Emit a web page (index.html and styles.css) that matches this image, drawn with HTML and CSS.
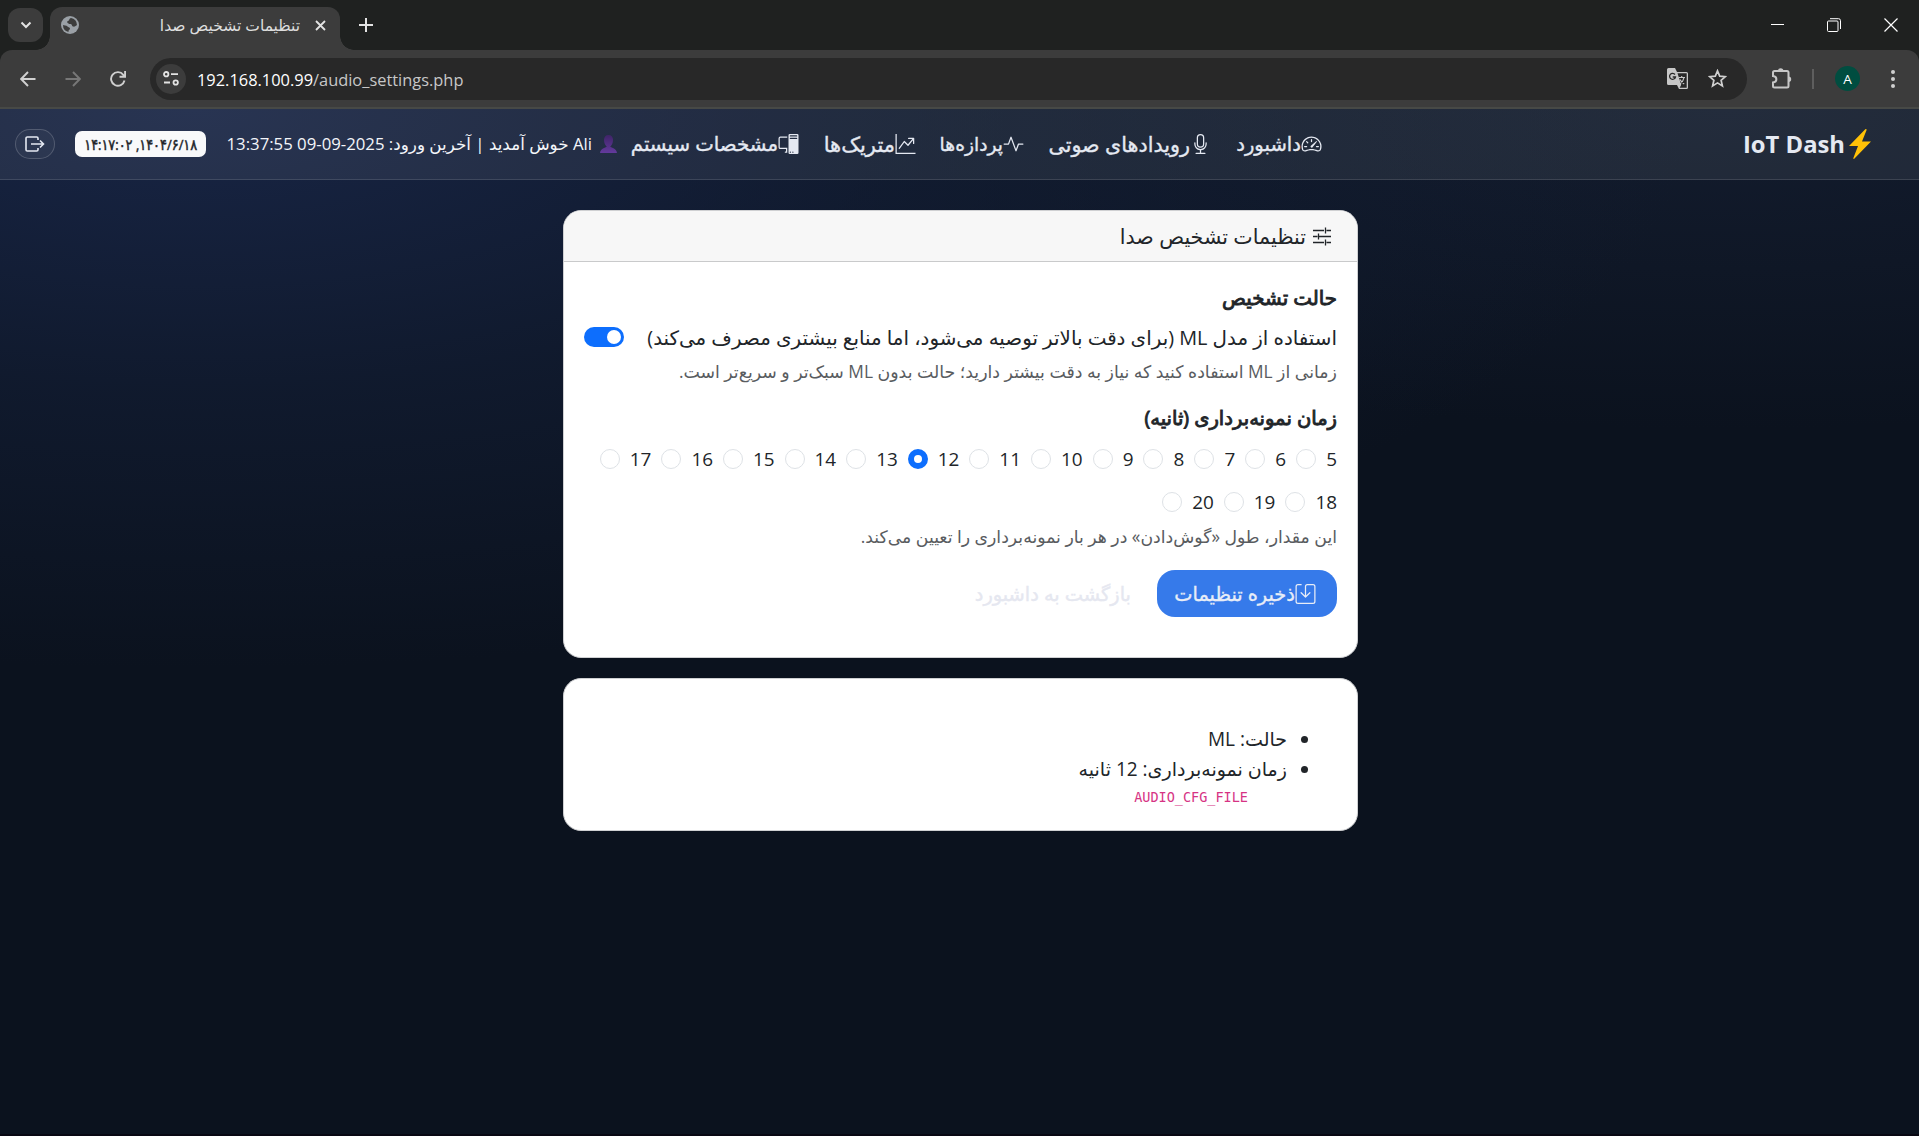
FILE: index.html
```
<!DOCTYPE html>
<html lang="fa">
<head>
<meta charset="utf-8">
<title>تنظیمات تشخیص صدا</title>
<link rel="stylesheet" href="styles.css">
</head>
<body>
<header class="browser">
  <div class="tabs">
    <div class="tab-search"><svg width="12" height="8" viewBox="0 0 12 8" fill="none" stroke="#e3e3e3" stroke-width="2"><path d="M1.5 1.5 6 6l4.500-4.500"/></svg></div>
    <div class="tab">
      <svg width="18" height="18" viewBox="0 0 18 18"><circle cx="9" cy="9" r="9" fill="#9aa0a6"/><path d="M10 2c-2 .5-1.500 2.500-3 3C5 5.500 7 8 9 8c2.500 0 1.500 2 3 2.500 1.500.5 3-.5 4-1.500a7 7 0 0 0-6-7zM2 9c1 .5 3.500 0 4.500 1.500.8 1.200 2.500.5 2.500 2s-2 1.500-1.500 3.500A7.200 7.200 0 0 1 2 9z" fill="#3c3c3c"/></svg>
      <span class="tab-title" dir="rtl">تنظیمات تشخیص صدا</span>
      <svg width="11" height="11" viewBox="0 0 11 11" stroke="#e3e3e3" stroke-width="1.800"><path d="m1 1 9 9M10 1l-9 9"/></svg>
    </div>
    <svg class="new-tab" width="14" height="14" viewBox="0 0 14 14" stroke="#e3e3e3" stroke-width="2"><path d="M7 0v14M0 7h14"/></svg>
    <div class="window-buttons">
      <svg width="13" height="13" viewBox="0 0 13 13" stroke="#fff"><path d="M0 5.500h13"/></svg>
      <svg width="14" height="14" viewBox="0 0 14 14" fill="none" stroke="#fff"><rect x=".5" y="3" width="10.500" height="10.500" rx="1"/><path d="M3 .7h8.500a2 2 0 0 1 2 2V11"/></svg>
      <svg width="14" height="14" viewBox="0 0 14 14" stroke="#fff" stroke-width="1.200"><path d="m.5.5 13 13M13.500.5l-13 13"/></svg>
    </div>
  </div>
  <div class="toolbar">
    <svg width="16" height="16" viewBox="0 0 16 16" fill="none" stroke="#d0d0d0" stroke-width="1.900"><path d="M15.500 8H1.500M8 1 1.200 8 8 15"/></svg>
    <svg width="16" height="16" viewBox="0 0 16 16" fill="none" stroke="#777" stroke-width="1.900"><path d="M.5 8h14M8 1l6.800 7L8 15"/></svg>
    <svg width="16" height="16" viewBox="0 0 16 16" fill="none" stroke="#d0d0d0" stroke-width="1.900"><path d="M14.500 9.500A6.800 6.800 0 1 1 13.300 3.800L15 5.500M15.100 0v5.700H9.500"/></svg>
    <div class="address">
      <div class="site-info"><svg width="16" height="15" viewBox="0 0 16 15" fill="none" stroke="#e3e3e3" stroke-width="1.800"><circle cx="3.200" cy="3.200" r="2.200"/><path d="M8 3.200h7M1 11.500h6"/><circle cx="12.700" cy="11.500" r="2.200"/></svg></div>
      <span class="url"><b>192.168.100.99</b>/audio_settings.php</span>
      <svg class="translate" width="21" height="21" viewBox="0 0 21 21"><path d="M1.500 0H8l2 4h9.500a1.500 1.500 0 0 1 1.500 1.500v14a1.500 1.500 0 0 1-1.500 1.500H12l-2-4H1.500A1.500 1.500 0 0 1 0 15.500v-14A1.500 1.500 0 0 1 1.500 0z" fill="#c7c7c7"/><path d="M10.500 5.300h9.200v14.400h-7l1.500-3z" fill="#282828"/><path d="M8 6.500A3 3 0 1 0 8.500 9H5.700" fill="none" stroke="#282828" stroke-width="1.300"/><path d="M11.800 9.500H18M14.700 8v1.500M17 9.500c-.5 3-2 5-4 6.500M13 11.500c1 2 2.500 3.500 4.200 4.500" fill="none" stroke="#c7c7c7" stroke-width="1.200"/></svg>
      <svg width="19" height="19" viewBox="0 0 19 19" fill="none" stroke="#d0d0d0" stroke-width="1.700"><path d="m9.500 1.800 2.200 5.300 5.700.5-4.300 3.700 1.300 5.600-4.900-3-4.900 3 1.300-5.600L1.600 7.600l5.700-.5z"/></svg>
    </div>
    <svg class="puzzle" width="21" height="21" viewBox="0 0 21 21"><path d="M2 4.500a1.500 1.500 0 0 1 1.500-1.500H16a1.500 1.500 0 0 1 1.500 1.500v13.500a1.500 1.500 0 0 1-1.500 1.500H3.500A1.500 1.500 0 0 1 2 18v-3.500c4.500-.5 4.500-6 0-6.500z" fill="none" stroke="#c7c7c7" stroke-width="2"/><path d="M7 3a2.700 2.700 0 0 1 5.400 0zM17.500 8.500a2.700 2.700 0 0 1 0 5.400z" fill="#c7c7c7"/></svg>
    <i class="divider"></i>
    <span class="avatar">A</span>
    <svg class="kebab" width="4" height="18" viewBox="0 0 4 18" fill="#d0d0d0"><circle cx="2" cy="2" r="2"/><circle cx="2" cy="9" r="2"/><circle cx="2" cy="16" r="2"/></svg>
  </div>
</header>

<div class="page" dir="rtl">
  <nav class="navbar">
    <a class="brand"><svg width="22" height="30" viewBox="0 0 22 30" fill="#ffc107"><path d="M16.500 0 0 17h9L4.200 29.500 5 30 22 12.500h-9L17.800.5z"/></svg><span dir="ltr">IoT Dash</span></a>
    <div class="links">
      <a class="link dash"><svg viewBox="0 0 16 16"><path d="M8 4a.5.5 0 0 1 .5.5V6a.5.5 0 0 1-1 0V4.500A.5.5 0 0 1 8 4M3.732 5.732a.5.5 0 0 1 .707 0l.915.914a.5.5 0 1 1-.708.708l-.914-.915a.5.5 0 0 1 0-.707M2 10a.5.5 0 0 1 .5-.5h1.586a.5.5 0 0 1 0 1H2.500A.5.5 0 0 1 2 10m9.500 0a.5.5 0 0 1 .5-.5h1.500a.5.5 0 0 1 0 1H12a.5.5 0 0 1-.5-.5m.754-4.246a.39.39 0 0 0-.527-.02L7.547 9.310a.91.91 0 1 0 1.302 1.258l3.434-4.297a.39.39 0 0 0-.029-.518z"/><path fill-rule="evenodd" d="M0 10a8 8 0 1 1 15.547 2.661c-.442 1.253-1.845 1.602-2.932 1.250C11.309 13.488 9.475 13 8 13c-1.474 0-3.310.488-4.615.911-1.087.352-2.490.003-2.932-1.250A8 8 0 0 1 0 10m8-7a7 7 0 0 0-6.603 9.329c.203.575.923.876 1.680.63C4.397 12.533 6.358 12 8 12s3.604.532 4.923.96c.757.245 1.477-.056 1.680-.631A7 7 0 0 0 8 3"/></svg><span>داشبورد</span></a>
      <a class="link events"><svg viewBox="0 0 16 16"><path d="M3.500 6.500A.5.5 0 0 1 4 7v1a4 4 0 0 0 8 0V7a.5.5 0 0 1 1 0v1a5 5 0 0 1-4.500 4.975V15h3a.5.5 0 0 1 0 1h-7a.5.5 0 0 1 0-1h3v-2.025A5 5 0 0 1 3 8V7a.5.5 0 0 1 .5-.5"/><path d="M10 8a2 2 0 1 1-4 0V3a2 2 0 1 1 4 0zM8 0a3 3 0 0 0-3 3v5a3 3 0 0 0 6 0V3a3 3 0 0 0-3-3"/></svg><span>رویدادهای صوتی</span></a>
      <a class="link procs"><svg viewBox="0 0 16 16"><path d="M6 2a.5.5 0 0 1 .47.33L10 12.036l1.530-4.208A.5.5 0 0 1 12 7.500h3.500a.5.5 0 0 1 0 1h-3.150l-1.880 5.170a.5.5 0 0 1-.94 0L6 3.964 4.470 8.171A.5.5 0 0 1 4 8.500H.5a.5.5 0 0 1 0-1h3.150l1.880-5.170A.5.5 0 0 1 6 2"/></svg><span>پردازه‌ها</span></a>
      <a class="link metrics"><svg viewBox="0 0 16 16"><path d="M0 0h1v15h15v1H0zm10 3.500a.5.5 0 0 1 .5-.5h4a.5.5 0 0 1 .5.5v4a.5.5 0 0 1-1 0V4.900l-3.613 4.417a.5.5 0 0 1-.74.037L7.060 6.767l-3.656 5.027a.5.5 0 0 1-.808-.588l4-5.500a.5.5 0 0 1 .758-.06l2.609 2.610L13.445 4H10.500a.5.5 0 0 1-.5-.5"/></svg><span>متریک‌ها</span></a>
      <a class="link system"><svg viewBox="0 0 16 16"><path d="M8 1a1 1 0 0 1 1-1h6a1 1 0 0 1 1 1v14a1 1 0 0 1-1 1H9a1 1 0 0 1-1-1zm1 13.500a.5.5 0 1 0 1 0 .5.5 0 0 0-1 0m2 0a.5.5 0 1 0 1 0 .5.5 0 0 0-1 0M9.500 1a.5.5 0 0 0 0 1h5a.5.5 0 0 0 0-1zM9 3.500a.5.5 0 0 0 .5.5h5a.5.5 0 0 0 0-1h-5a.5.5 0 0 0-.5.5M1.500 2A1.500 1.500 0 0 0 0 3.500v7A1.500 1.500 0 0 0 1.500 12H6v2h-.5a.5.5 0 0 0 0 1H7v-4H1.500a.5.5 0 0 1-.5-.5v-7a.5.5 0 0 1 .5-.5H7V2z"/></svg><span>مشخصات سیستم</span></a>
    </div>
    <div class="user">
      <svg width="17" height="18" viewBox="0 0 17 18"><defs><linearGradient id="bust" x2="0" y2="1"><stop stop-color="#3f2468"/><stop offset="1" stop-color="#633a9c"/></linearGradient></defs><path d="M8.500 0C5.500 0 4 2 4 5s1.300 5.500 2.800 6.500c-.3 1-6.300 1.500-6.800 6.500h17c-.5-5-6.500-5.500-6.800-6.500C11.700 10.500 13 8 13 5s-1.500-5-4.500-5z" fill="url(#bust)"/></svg>
      <span class="welcome">Ali خوش آمدید | آخرین ورود: <bdi dir="ltr">13:37:55 09-09-2025</bdi></span>
    </div>
    <span class="clock"><span>۱۴۰۴/۶/۱۸, ۱۴:۱۷:۰۲</span></span>
    <a class="logout"><svg width="20" height="16" viewBox="0 0 20 16" fill="none" stroke="#e5e9f2" stroke-width="1.600"><path d="M13 4V2.300A1.300 1.300 0 0 0 11.700 1H2.300A1.300 1.300 0 0 0 1 2.300v11.400A1.300 1.300 0 0 0 2.300 15h9.400a1.300 1.300 0 0 0 1.300-1.300V12M6 8h12.500M15 4.500 18.500 8 15 11.500"/></svg></a>
  </nav>

  <main class="content">
    <section class="card">
      <div class="card-header"><svg width="18" height="19" viewBox="0 0 18 19" stroke="#212529" stroke-width="1.300"><path d="M0 3.500h11M13.500 3.500H18M12.500.5v6M0 9.500h4.500M6 9.500h12M5.500 6.500v6M0 15.500h11M13.500 15.500H18M12.500 12.500v6"/></svg><span>تنظیمات تشخیص صدا</span></div>
      <div class="card-body">
        <h2 class="mode-title">حالت تشخیص</h2>
        <div class="switch-row"><label>استفاده از مدل ML (برای دقت بالاتر توصیه می‌شود، اما منابع بیشتری مصرف می‌کند)</label><span class="switch"></span></div>
        <p class="help mode-help">زمانی از ML استفاده کنید که نیاز به دقت بیشتر دارید؛ حالت بدون ML سبک‌تر و سریع‌تر است.</p>
        <h2 class="time-title">زمان نمونه‌برداری (ثانیه)</h2>
        <div class="radios">
          <label class="one">5<i></i></label><label class="one">6<i></i></label><label class="one">7<i></i></label><label class="one">8<i></i></label><label class="one">9<i></i></label><label>10<i></i></label><label>11<i></i></label><label>12<i class="on"></i></label><label>13<i></i></label><label>14<i></i></label><label>15<i></i></label><label>16<i></i></label><label>17<i></i></label><label>18<i></i></label><label>19<i></i></label><label>20<i></i></label>
        </div>
        <p class="help time-help">این مقدار، طول «گوش‌دادن» در هر بار نمونه‌برداری را تعیین می‌کند.</p>
        <div class="actions">
          <a class="save"><svg width="21" height="20" viewBox="0 0 16 16"><path d="M2 1a1 1 0 0 0-1 1v12a1 1 0 0 0 1 1h12a1 1 0 0 0 1-1V2a1 1 0 0 0-1-1H9.500a1 1 0 0 0-1 1v7.293l2.646-2.647a.5.5 0 0 1 .708.708l-3.500 3.500a.5.5 0 0 1-.708 0l-3.500-3.500a.5.5 0 1 1 .708-.708L7.500 9.293V2a2 2 0 0 1 2-2H14a2 2 0 0 1 2 2v12a2 2 0 0 1-2 2H2a2 2 0 0 1-2-2V2a2 2 0 0 1 2-2h2.500a.5.5 0 0 1 0 1z"/></svg><span>ذخیره تنظیمات</span></a>
          <a class="back">بازگشت به داشبورد</a>
        </div>
      </div>
    </section>
    <section class="card summary">
      <ul>
        <li>حالت: ML</li>
        <li>زمان نمونه‌برداری: 12 ثانیه</li>
      </ul>
      <code>AUDIO_CFG_FILE</code>
    </section>
  </main>
</div>
</body>
</html>
```
FILE: styles.css
```
* { box-sizing: border-box; }
body {
  margin: 0;
  height: 1136px;
  display: flex;
  flex-direction: column;
  overflow: hidden;
  background: #1f2120;
  font-family: "Open Sans", "DejaVu Sans", sans-serif;
}
svg { flex: none; display: block; }
h2, p, ul { margin: 0; padding: 0; }

/* browser frame */
.browser { height: 109px; flex: none; direction: ltr; }
.tabs { height: 50px; display: flex; align-items: center; padding-left: 8px; }
.tab-search {
  width: 35px; height: 34px; border-radius: 12px; background: #3c3c3c;
  display: flex; align-items: center; justify-content: center;
}
.tab {
  position: relative;
  width: 290px; height: 43px; margin: 7px 0 0 7px; padding: 0 14px 7px 11px;
  border-radius: 12px 12px 0 0; background: #3c3c3c;
  display: flex; align-items: center;
}
.tab::before, .tab::after {
  content: ""; position: absolute; bottom: 0; width: 14px; height: 14px;
}
.tab::before { left: -14px; background: radial-gradient(circle at 0 0, transparent 13.5px, #3c3c3c 14px); }
.tab::after { right: -14px; background: radial-gradient(circle at 100% 0, transparent 13.5px, #3c3c3c 14px); }
.tab-title { margin-left: auto; margin-right: 15px; font-size: 15.5px; line-height: 20px; color: #dedede; white-space: nowrap; }
.new-tab { margin-left: 19px; }
.window-buttons { margin-left: auto; display: flex; gap: 43px; padding-right: 21px; align-items: center; }
.toolbar {
  height: 59px; padding: 0 24px 0 20px; display: flex; align-items: center;
  background: #3c3c3c; border-bottom: 2px solid #474946; border-radius: 12px 12px 0 0;
}
.toolbar > svg + svg { margin-left: 29px; }
.address {
  width: 1597px; height: 42px; margin-left: 24px; padding: 0 20px 0 6px; border-radius: 21px;
  background: #282828; display: flex; align-items: center;
}
.site-info {
  width: 30px; height: 30px; border-radius: 50%; background: #3c3c3c;
  display: flex; align-items: center; justify-content: center;
}
.url { margin-left: 11px; padding-top: 1px; font-size: 16.4px; color: #c7c7c7; }
.url b { font-weight: 400; color: #fff; }
.translate { margin-left: auto; margin-right: 20px; }
.puzzle { margin-left: 24px; }
.divider { width: 2px; height: 20px; margin-left: 20px; background: #5e5e5e; }
.avatar {
  width: 25px; height: 25px; margin-left: 21px; border-radius: 50%; background: #004d40; color: #fff;
  display: flex; align-items: center; justify-content: center; font-size: 13.5px;
}
.kebab { margin-left: auto; }

/* page */
.page {
  flex: 1;
  border-bottom: 2px solid #080712;
  background:
    radial-gradient(1500px 560px at 10% 0, #182545 0%, rgba(20, 32, 58, 0.55) 50%, transparent 100%),
    radial-gradient(1100px 320px at 90% 0, #131c2e, transparent),
    #0b121e;
}
.navbar {
  height: 71px; padding: 0 48px 0 15px; display: flex; align-items: center;
  background: rgba(255, 255, 255, 0.07); border-bottom: 1px solid rgba(255, 255, 255, 0.12);
  white-space: nowrap; color: #e5e9f2;
}
.brand { width: 128px; display: flex; align-items: center; gap: 4px; font-size: 23.8px; font-weight: 700; }
.links { display: flex; gap: 24px; margin-right: 421px; font-size: 19.8px; line-height: 30px; }
.link { display: flex; align-items: center; -webkit-text-stroke: 0.35px #e5e9f2; }
.link svg { width: 21px; height: 20px; fill: #e5e9f2; overflow: visible; }
.dash { width: 87px; font-size: 19.6px; }
.events { width: 163px; font-size: 20.7px; }
.procs { width: 84px; font-size: 18.7px; }
.metrics { width: 93px; font-size: 21px; }
.system { width: 169px; }
.user { width: 390px; margin-right: 13px; display: flex; align-items: center; gap: 8px; }
.welcome { font-size: 16.75px; line-height: 28px; color: #f4f6fa; }
.clock {
  width: 131px; height: 26px; margin-right: 21px; border-radius: 7px; background: #f8f9fa; color: #212529;
  display: flex; align-items: center; justify-content: center;
  font-size: 15px; line-height: 20px; -webkit-text-stroke: 0.5px #212529;
}
.clock span { transform: scaleX(0.86); }
.logout {
  width: 40px; height: 30px; margin-right: 20px; border-radius: 15px;
  border: 1px solid rgba(255, 255, 255, 0.18); background: rgba(255, 255, 255, 0.03);
  display: flex; align-items: center; justify-content: center;
}

/* settings */
.content { width: 795px; margin: 30px 561px 0 0; display: flex; flex-direction: column; gap: 20px; color: #212529; white-space: nowrap; }
.card { border: 1px solid #cfd0d2; border-radius: 18px; background: #fff; overflow: hidden; }
.card:first-child { height: 448px; }
.card-header {
  height: 51px; padding-right: 26px; display: flex; align-items: center; gap: 7px;
  background: #f7f7f7; border-bottom: 1px solid #c9cacb; font-size: 20.6px;
}
.card-body { padding: 19px 20px 0; }
h2 { height: 34px; line-height: 34px; font-weight: 400; -webkit-text-stroke: 0.9px #212529; }
.mode-title { font-size: 19.8px; margin-bottom: 1px; }
.time-title { font-size: 19.5px; margin-top: 17px; }
.switch-row { height: 42px; display: flex; align-items: center; justify-content: space-between; font-size: 19.88px; }
.switch { width: 40px; height: 20px; border-radius: 10px; padding: 3px; background: #0d6efd; display: flex; }
.switch::before { content: ""; width: 14px; height: 14px; border-radius: 50%; background: #fff; }
.help { height: 26px; line-height: 26px; color: #595c5f; }
.mode-help { font-size: 17.33px; }
.time-help { font-size: 17.25px; margin-top: 1px; }
.radios { display: flex; flex-wrap: wrap; margin-top: 2px; padding-left: 5px; font-size: 18.9px; }
.radios label { width: 61.6px; height: 43px; display: flex; align-items: center; justify-content: space-between; padding-left: 10px; }
.radios .one { width: 50.9px; }
.radios i { width: 20px; height: 20px; border: 1px solid #dee2e6; border-radius: 50%; }
.radios .on { border: 6px solid #0d6efd; }
.actions { display: flex; align-items: center; margin-top: 20px; }
.save {
  width: 180px; height: 47px; padding-right: 21px; border-radius: 18px; background: #367aea; color: #e8edf7;
  display: flex; align-items: center; font-size: 19.4px; -webkit-text-stroke: 0.35px #e8edf7;
}
.save svg { fill: #e8edf7; }
.back { margin-right: 26px; font-size: 19.4px; color: #e5e7f0; -webkit-text-stroke: 0.35px #e5e7f0; }
.summary { height: 153px; padding: 45px 28px 0 20px; font-size: 19.05px; }
.summary ul { list-style: none; }
.summary li { display: flex; align-items: center; gap: 14px; height: 30px; line-height: 28px; padding-right: 21px; }
.summary li::before { content: ""; width: 7px; height: 7px; border-radius: 50%; background: #212529; }
.summary code { display: block; padding-right: 81px; font: 13.5px/26px "DejaVu Sans Mono", monospace; color: #d63384; }
```
